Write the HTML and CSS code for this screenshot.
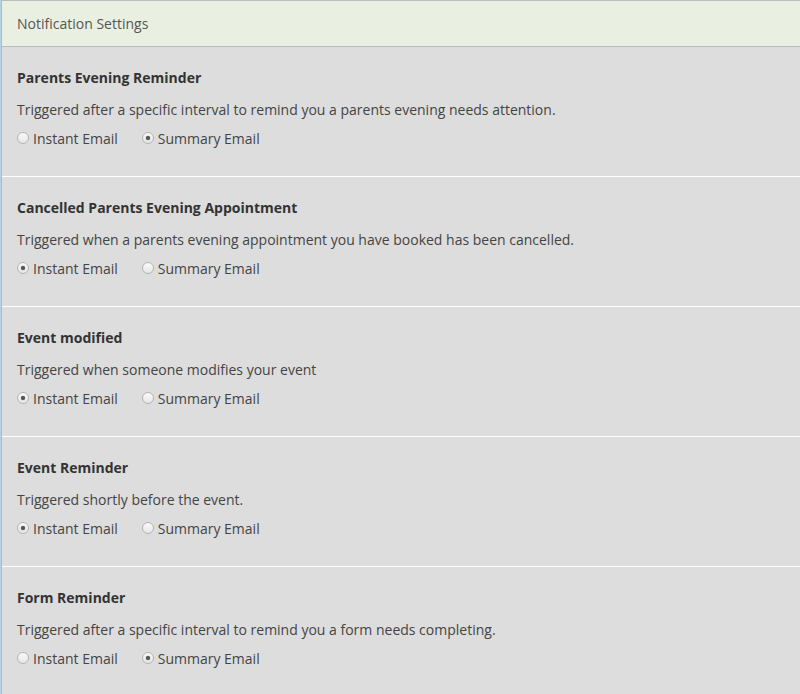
FILE: index.html
```html
<!DOCTYPE html>
<html lang="en">
<head>
  <meta charset="UTF-8" />
  <title>Notification Settings</title>
  <link rel="stylesheet" href="styles.css">
</head>
<body>
  <div class="panel">
    <div class="panel-header">Notification Settings</div>

    <div class="setting">
      <div class="setting-title">Parents Evening Reminder</div>
      <div class="setting-desc">Triggered after a specific interval to remind you a parents evening needs attention.</div>
      <div class="options">
        <label><input type="radio" name="pe-reminder" /> Instant Email</label>
        <label><input type="radio" name="pe-reminder" checked /> Summary Email</label>
      </div>
    </div>

    <div class="setting">
      <div class="setting-title">Cancelled Parents Evening Appointment</div>
      <div class="setting-desc">Triggered when a parents evening appointment you have booked has been cancelled.</div>
      <div class="options">
        <label><input type="radio" name="pe-cancel" checked /> Instant Email</label>
        <label><input type="radio" name="pe-cancel" /> Summary Email</label>
      </div>
    </div>

    <div class="setting">
      <div class="setting-title">Event modified</div>
      <div class="setting-desc">Triggered when someone modifies your event</div>
      <div class="options">
        <label><input type="radio" name="event-mod" checked /> Instant Email</label>
        <label><input type="radio" name="event-mod" /> Summary Email</label>
      </div>
    </div>

    <div class="setting">
      <div class="setting-title">Event Reminder</div>
      <div class="setting-desc">Triggered shortly before the event.</div>
      <div class="options">
        <label><input type="radio" name="event-rem" checked /> Instant Email</label>
        <label><input type="radio" name="event-rem" /> Summary Email</label>
      </div>
    </div>

    <div class="setting">
      <div class="setting-title">Form Reminder</div>
      <div class="setting-desc">Triggered after a specific interval to remind you a form needs completing.</div>
      <div class="options">
        <label><input type="radio" name="form-rem" /> Instant Email</label>
        <label><input type="radio" name="form-rem" checked /> Summary Email</label>
      </div>
    </div>
  </div>
</body>
</html>
```

FILE: styles.css
```css
html {
  background: #b3d4e8;
}

body {
  margin: 0;
  font-family: 'Open Sans', sans-serif;
  font-size: 14px;
  line-height: 20px;
  color: #444;
}

.panel {
  margin-left: 1px;
  background: #dddddd;
  border-left: 1px solid #b8b8b8;
  min-height: 694px;
}

.panel-header {
  background: #e9f0e1;
  border-top: 1px solid #bcbcbc;
  border-bottom: 1px solid #bcbcbc;
  padding: 13px 15px 12px;
  color: #555;
}

.setting {
  padding: 21px 15px 27px;
  border-bottom: 1px solid #ffffff;
}

.setting-title {
  font-weight: bold;
  color: #333;
}

.setting-desc {
  margin-top: 12px;
}

.options {
  margin-top: 9px;
  display: flex;
  gap: 24px;
}

label {
  display: flex;
  align-items: center;
  gap: 4px;
  cursor: pointer;
}

input[type="radio"] {
  appearance: none;
  -webkit-appearance: none;
  width: 12px;
  height: 12px;
  margin: 0 0 2px;
  border: 1px solid #b4b4b4;
  border-radius: 50%;
  background: linear-gradient(#fafafa, #e6e6e6);
  position: relative;
}

input[type="radio"]:checked::after {
  content: '';
  position: absolute;
  left: 3px;
  top: 3px;
  width: 4px;
  height: 4px;
  border-radius: 50%;
  background: #555;
  box-shadow: 0 0 1px #555;
}
```
